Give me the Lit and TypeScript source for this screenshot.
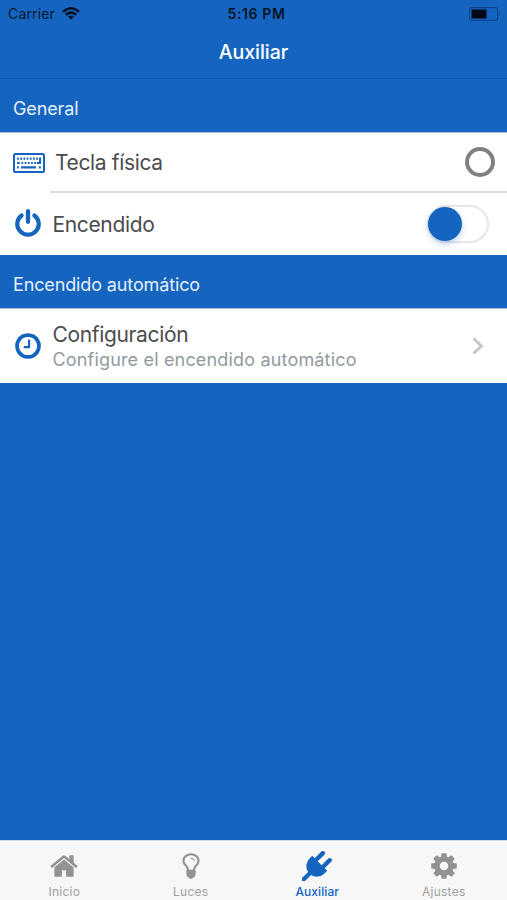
import { LitElement, html, css, svg } from "lit";
import { customElement, property } from "lit/decorators.js";

const paths: Record<string, string> = {
  home: "M1472 992v480q0 26-19 45t-45 19h-384v-384h-256v384h-384q-26 0-45-19t-19-45v-480q0-1 .5-3t.5-3l575-474 575 474q1 2 1 6zm223-69l-62 74q-8 9-21 11h-3q-13 0-21-7l-692-577-692 577q-12 8-24 7-13-2-21-11l-62-74q-8-10-7-23.5t11-21.5l719-599q32-26 76-26t76 26l244 204v-195q0-14 9-23t23-9h192q14 0 23 9t9 23v408l219 182q10 8 11 21.5t-7 23.5z",
  power: "M1664 896q0 156-61 298t-164 245-245 164-298 61-298-61-245-164-164-245-61-298q0-182 80.5-343t226.5-270q43-32 95.5-25t83.5 50q32 42 24.5 94.5t-49.5 84.5q-98 74-151.5 181t-53.5 228q0 104 40.5 198.5t109.5 163.5 163.5 109.5 198.5 40.5 198.5-40.5 163.5-109.5 109.5-163.5 40.5-198.5q0-121-53.5-228t-151.5-181q-42-32-49.5-84.5t24.5-94.5q31-43 84-50t95 25q146 109 226.5 270t80.5 343zm-640-768v640q0 52-38 90t-90 38-90-38-38-90v-640q0-52 38-90t90-38 90 38 38 90z",
  clock: "M1024 544v448q0 14-9 23t-23 9h-320q-14 0-23-9t-9-23v-64q0-14 9-23t23-9h224v-352q0-14 9-23t23-9h64q14 0 23 9t9 23zm416 352q0-148-73-273t-198-198-273-73-273 73-198 198-73 273 73 273 198 198 273 73 273-73 198-198 73-273zm224 0q0 209-103 385.5t-279.5 279.5-385.5 103-385.5-103-279.5-279.5-103-385.5 103-385.5 279.5-279.5 385.5-103 385.5 103 279.5 279.5 103 385.5z",
  cog: "M1152 896q0-106-75-181t-181-75-181 75-75 181 75 181 181 75 181-75 75-181zm512-109v222q0 12-8 23t-20 13l-185 28q-19 54-39 91 35 50 107 138 10 12 10 25t-9 23q-27 37-99 108t-94 71q-12 0-26-9l-138-108q-44 23-91 38-16 136-29 186-7 28-36 28h-222q-14 0-24.5-8.5t-11.5-21.5l-28-184q-49-16-90-37l-141 107q-10 9-25 9-14 0-25-11-126-114-165-168-7-10-7-23 0-12 8-23 15-21 51-66.5t54-70.5q-27-50-41-99l-183-27q-13-2-21-12.5t-8-23.5v-222q0-12 8-23t19-13l186-28q14-46 39-92-40-57-107-138-10-12-10-24 0-10 9-23 26-36 98.5-107.5t94.5-71.5q13 0 26 10l138 107q44-23 91-38 16-136 29-186 7-28 36-28h222q14 0 24.5 8.5t11.5 21.5l28 184q49 16 90 37l142-107q9-9 24-9 13 0 25 10 129 119 165 170 7 8 7 22 0 12-8 23-15 21-51 66.5t-54 70.5q26 50 41 98l183 28q13 2 21 12.5t8 23.5z",
  plug: "M1755 453q37 38 37 90.5t-37 90.5l-401 400 150 150-160 160q-163 163-389.5 186.5t-411.5-100.5l-362 362h-181v-181l362-362q-124-185-100.5-411.5t186.5-389.5l160-160 150 150 400-401q38-37 91-37t90 37 37 90.5-37 90.5l-400 401 234 234 401-400q38-37 91-37t90 37z",
  bulb: "M1120 576q0 13-9.5 22.5t-22.5 9.5-22.5-9.5-9.5-22.5q0-46-54-71t-106-25q-13 0-22.5-9.5t-9.5-22.5 9.5-22.5 22.5-9.5q50 0 99.5 16t87 54 37.5 90zm160 0q0-72-34.5-134t-90-101.5-123-62-136.5-22.5-136.5 22.5-123 62-90 101.5-34.5 134q0 101 68 180 10 11 30.5 33t30.5 33q128 153 141 298h228q13-145 141-298 10-11 30.5-33t30.5-33q68-79 68-180zm128 0q0 155-103 268-45 49-74.5 87t-59.5 95.5-34 107.5q47 28 47 82 0 37-25 64 25 27 25 64 0 52-45 81 13 23 13 47 0 46-31.5 71t-77.5 25q-20 44-60 70t-87 26-87-26-60-70q-46 0-77.5-25t-31.5-71q0-24 13-47-45-29-45-81 0-37 25-64-25-27-25-64 0-54 47-82-4-50-34-107.5t-59.5-95.5-74.5-87q-103-113-103-268 0-99 44.5-184.5t117-142 164-89 186.5-32.5 186.5 32.5 164 89 117 142 44.5 184.5z",
};

@customElement("glyph-icon")
class GlyphIcon extends LitElement {
  @property() name = "home";
  static styles = css`
    :host { display: block; width: 30px; height: 30px; flex: none; }
    svg { display: block; width: 100%; height: 100%; fill: currentColor; }
  `;
  render() {
    return html`<svg viewBox="0 0 1792 1792">${svg`<path d=${paths[this.name]} />`}</svg>`;
  }
}

@customElement("keyboard-icon")
class KeyboardIcon extends LitElement {
  static styles = css`
    :host { display: block; width: 32px; height: 20px; flex: none; }
    svg { display: block; }
  `;
  render() {
    const keys = [
      ...[4, 7.2, 10.4, 13.6, 16.8, 20, 23.2].map((x) => [x, 4.6, 1.8]),
      ...[4, 8.4, 11.6, 14.8, 18, 21.2].map((x) => [x, 8.9, x === 4 ? 2.8 : 1.8]),
      [4, 13.2, 1.8], [8, 13.2, 15], [25.8, 13.2, 2],
    ];
    return html`<svg width="32" height="20" viewBox="0 0 32 20" fill="currentColor">
      <rect x="1" y="1" width="30" height="18" rx="1.6" fill="none" stroke="currentColor" stroke-width="2" />
      ${keys.map(([x, y, w]) => svg`<rect x=${x} y=${y} width=${w} height="2.2" rx=".3" />`)}
      <path d="M26 4.6h2v6.500h-4v-2.200h2z" />
    </svg>`;
  }
}

@customElement("app-root")
class AppRoot extends LitElement {
  static styles = css`
    :host {
      display: flex; flex-direction: column; height: 900px; overflow: hidden;
      background: #1565c0; color: #4b4c4e;
      font-family: Inter, "Liberation Sans", sans-serif; font-size: 21px;
      white-space: nowrap;
    }
    * { box-sizing: border-box; }
    .status {
      display: grid; grid-template-columns: 1fr auto 1fr; align-items: center;
      height: 27px; padding: 0 6px 0 8px; color: #06172f; font-size: 14px;
    }
    .carrier { display: flex; align-items: center; gap: 7px; letter-spacing: .15px; }
    .time { font-weight: 600; font-size: 14px; letter-spacing: .6px; color: #051226; padding-left: 4px; }
    .battery { justify-self: end; display: block; }
    .title {
      height: 52px; border-bottom: 1px solid #1259ad; color: #fff; text-align: center;
      font-size: 19.500px; font-weight: 500; line-height: 51px; letter-spacing: -.05px;
    }
    .head { height: 53px; padding: 5px 13px 0; color: #e3effb; font-size: 18px; line-height: 49px; letter-spacing: -.13px; }
    .head.second { padding-top: 4px; line-height: 51px; }
    .list { background: #fff; border-top: 1px solid #a9bddd; }
    .row { display: flex; align-items: center; padding-left: 13px; }
    .blue { color: #1565c0; }
    .key { height: 58px; padding-top: 2px; }
    .key .name { flex: 1; margin-left: 10px; }
    .name { letter-spacing: -.35px; line-height: 26px; }
    .radio { width: 30px; height: 30px; border: 4px solid #808080; border-radius: 50%; margin-right: 12px; margin-bottom: 2px; }
    .line { height: 2px; margin-left: 50px; background: #dddddf; }
    .on { height: 62px; }
    .on .name { padding-top: 2px; }
    .on .name, .texts { flex: 1; margin-left: 10px; }
    .switch { width: 62px; height: 38px; border: 2px solid #e6e6e8; border-radius: 19px; margin-right: 18px; }
    .knob { width: 34px; height: 34px; border-radius: 50%; background: #1565c0; box-shadow: 0 3px 6px #1565c044; margin-left: -1px; }
    .wide { padding-left: 12.500px; }
    .config { height: 74px; }
    .texts { padding-top: 1px; }
    .sub { color: #929a9f; font-size: 18px; line-height: 24px; letter-spacing: .17px; }
    .chevron { display: block; margin-right: 23px; }
    .space { flex: 1; }
    .tabs { display: grid; grid-template-columns: repeat(4, 1fr); height: 60px; padding-left: 1px; background: #f7f7f7; border-top: 1px solid #d4dce7; }
    .tab { display: flex; flex-direction: column; align-items: center; color: #929292; font-size: 12px; padding-top: 10px; letter-spacing: .25px; }
    .tab .label { line-height: 16px; margin-top: 3px; color: #a0a0a0; }
    .tab.active, .tab.active .label { color: #1565c0; }
    .tab.active .label { font-weight: 500; letter-spacing: .1px; }
  `;

  tab(icon: string, label: string, active = false) {
    return html`<div class="tab ${active ? "active" : ""}">
      <glyph-icon name=${icon}></glyph-icon><span class="label">${label}</span>
    </div>`;
  }

  render() {
    return html`
      <div class="status">
        <div class="carrier">
          <span>Carrier</span>
          <svg width="18" height="13" viewBox="0 0 18 13" fill="none" stroke="#051226" stroke-width="2.500">
            <path d="M1 4.700Q9-2.200 17 4.700M3.800 7.700Q9 3.500 14.200 7.700" />
            <path d="M6 9.600Q9 7.500 12 9.600L9 12.700z" fill="#051226" stroke="none" />
          </svg>
        </div>
        <div class="time">5:16 PM</div>
        <svg class="battery" width="32" height="14" viewBox="0 0 32 14">
          <rect x=".6" y=".6" width="28" height="12.800" rx="2.500" fill="none" stroke="#0e438a" stroke-width="1.100" />
          <rect x="2.500" y="2.500" width="15" height="9" rx=".7" fill="#020916" />
          <path d="M30 4.500q1.700 2.500 0 5z" fill="#0e438a" />
        </svg>
      </div>
      <div class="title">Auxiliar</div>
      <div class="head">General</div>
      <div class="list">
        <div class="row key">
          <keyboard-icon class="blue"></keyboard-icon>
          <span class="name">Tecla física</span>
          <span class="radio"></span>
        </div>
        <div class="line"></div>
        <div class="row on wide">
          <glyph-icon class="blue" name="power"></glyph-icon>
          <span class="name">Encendido</span>
          <div class="switch"><div class="knob"></div></div>
        </div>
      </div>
      <div class="head second">Encendido automático</div>
      <div class="list">
        <div class="row config wide">
          <glyph-icon class="blue" name="clock"></glyph-icon>
          <div class="texts">
            <div class="name">Configuración</div>
            <div class="sub">Configure el encendido automático</div>
          </div>
          <svg class="chevron" width="12" height="18" viewBox="0 0 12 18" fill="none" stroke="#c3c5c7" stroke-width="2.800">
            <path d="M1.500 1.500L9.500 9l-8 7.500" />
          </svg>
        </div>
      </div>
      <div class="space"></div>
      <div class="tabs">
        ${this.tab("home", "Inicio")} ${this.tab("bulb", "Luces")}
        ${this.tab("plug", "Auxiliar", true)} ${this.tab("cog", "Ajustes")}
      </div>
    `;
  }
}
